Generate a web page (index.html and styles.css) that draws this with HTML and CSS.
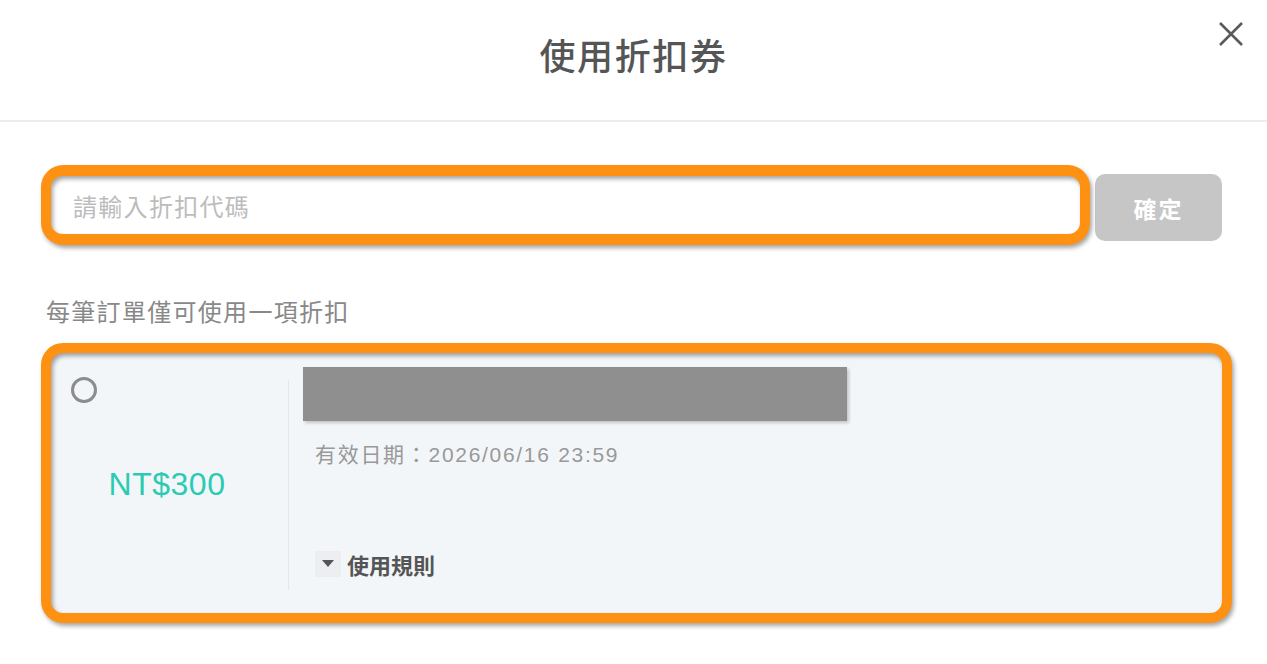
FILE: index.html
```html
<!DOCTYPE html>
<html lang="zh-Hant">
<head>
  <meta charset="UTF-8" />
  <meta name="viewport" content="width=device-width, initial-scale=1.0"/>
  <title>使用折扣券</title>
  <link rel="stylesheet" href="styles.css">
</head>
<body>
  <div class="dialog">

    <!-- Header -->
    <div class="header">
      <div></div>
      <h1 class="title">使用折扣券</h1>
      <button class="close-btn" aria-label="關閉">
        <svg width="24" height="24" viewBox="0 0 24 24">
          <path d="M1 1 L23 23 M23 1 L1 23" stroke="#5a5a5a" stroke-width="2.6" fill="none"/>
        </svg>
      </button>
    </div>

    <div class="content">

      <!-- Code input -->
      <div class="code-row">
        <div class="code-field ring ring-input">
          <input class="code-input" type="text" placeholder="請輸入折扣代碼" />
        </div>
        <button class="confirm-btn">確定</button>
      </div>

      <p class="hint">每筆訂單僅可使用一項折扣</p>

      <!-- Coupon -->
      <div class="coupon ring ring-card">
        <div class="coupon-left">
          <span class="radio"></span>
          <div class="amount">NT$300</div>
        </div>
        <div class="divider"></div>
        <div class="coupon-right">
          <div class="coupon-name"></div>
          <div class="expiry">有效日期：2026/06/16 23:59</div>
          <div class="rules">
            <span class="rules-arrow">
              <svg width="12" height="8" viewBox="0 0 12 8"><path d="M0 0 H12 L6 7 Z" fill="#555"/></svg>
            </span>
            <span class="rules-text">使用規則</span>
          </div>
        </div>
      </div>

    </div>
  </div>
</body>
</html>
```

FILE: styles.css
```css
body {
  margin: 0;
  padding: 0;
  font-family: 'Liberation Sans', 'Noto Sans CJK TC', sans-serif;
  background-color: #fff;
  color: #555;
}

.dialog {
  width: 1267px;
  height: 664px;
  overflow: hidden;
}

/* header */
.header {
  height: 120px;
  border-bottom: 2px solid #ececec;
  display: grid;
  grid-template-columns: 1fr auto 1fr;
  align-items: center;
}

.title {
  margin: 0;
  font-size: 36px;
  font-weight: 500;
  letter-spacing: 1.6px;
  color: #555;
  padding-bottom: 12px;
}

.close-btn {
  justify-self: end;
  align-self: start;
  margin: 22px 24px 0 0;
  padding: 0;
  border: none;
  background: none;
  width: 24px;
  height: 24px;
  cursor: pointer;
}

.content {
  padding: 52px 45px 0 46px;
}

/* orange highlight rings */
.ring {
  position: relative;
}

.ring::after {
  content: "";
  position: absolute;
  border: 10px solid #ff9112;
  border-radius: 22px;
  pointer-events: none;
  filter: drop-shadow(2px 3px 2px rgba(0, 0, 0, 0.35));
}

.ring-input::after {
  top: -9px;
  bottom: -4px;
  left: -5px;
  right: -5px;
  border-width: 11px 10px;
}

.ring-card::after {
  top: -5px;
  bottom: -5px;
  left: -5px;
  right: -5px;
}

/* code input */
.code-row {
  display: flex;
  gap: 10px;
}

.code-field {
  flex-grow: 1;
}

.code-input {
  width: 100%;
  height: 67px;
  box-sizing: border-box;
  border: 1px solid #ddd;
  border-radius: 10px;
  padding: 0 26px;
  font-family: inherit;
  font-size: 24px;
  letter-spacing: 1.3px;
  color: #555;
  outline: none;
}

.code-input::placeholder {
  color: #bcbcbc;
}

.confirm-btn {
  width: 127px;
  height: 67px;
  border: none;
  border-radius: 10px;
  background-color: #c5c6c5;
  color: #fff;
  font-family: inherit;
  font-size: 23px;
  font-weight: bold;
  letter-spacing: 2px;
  cursor: pointer;
}

.hint {
  margin: 57px 0 20px;
  font-size: 24px;
  line-height: 30px;
  letter-spacing: 1.3px;
  color: #888;
}

/* coupon card */
.coupon {
  margin-right: -5px;
  height: 270px;
  box-sizing: border-box;
  background-color: #f3f6f9;
  border-radius: 12px;
  display: flex;
}

.coupon-left {
  width: 242px;
  display: flex;
  flex-direction: column;
}

.radio {
  width: 20px;
  height: 20px;
  border: 3px solid #8c8c8c;
  border-radius: 50%;
  margin: 29px 0 0 25px;
}

.amount {
  margin-top: 61px;
  text-align: center;
  font-size: 32px;
  line-height: 40px;
  letter-spacing: 0.5px;
  color: #2bcbb3;
}

.divider {
  width: 1px;
  background-color: #e3e6ea;
  margin: 32px 0 28px;
}

.coupon-right {
  flex-grow: 1;
  display: flex;
  flex-direction: column;
  padding: 19px 0 38px 14px;
}

.coupon-name {
  width: 544px;
  height: 54px;
  background-color: #8f8f8f;
  box-shadow: 2px 2px 3px rgba(0, 0, 0, 0.2);
}

.expiry {
  margin-top: 19px;
  padding-left: 12px;
  font-size: 21px;
  line-height: 30px;
  letter-spacing: 1.7px;
  color: #999;
}

.rules {
  margin-top: auto;
  padding-left: 12px;
  display: flex;
  align-items: center;
  gap: 6px;
}

.rules-arrow {
  width: 26px;
  height: 26px;
  background-color: #eceef1;
  display: flex;
  justify-content: center;
  align-items: center;
}

.rules-text {
  font-size: 22px;
  font-weight: bold;
  color: #555;
}
```
